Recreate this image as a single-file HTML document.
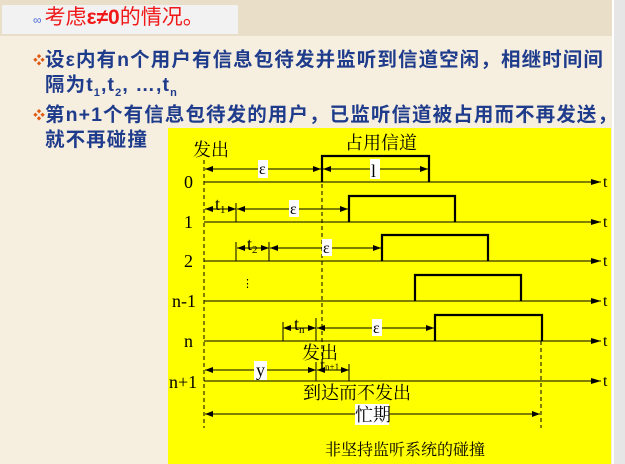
<!DOCTYPE html>
<html><head><meta charset="utf-8"><style>
html,body{margin:0;padding:0;}
body{width:625px;height:464px;position:relative;overflow:hidden;background:#f6eedf;font-family:"Liberation Sans","Noto Sans CJK SC",sans-serif;}
.top{position:absolute;left:0;top:0;width:612px;height:36px;background:#e9dfc8;}
.hdr{position:absolute;left:2px;top:5px;width:236px;height:29px;background:#f2f2f2;}
.ttl{position:absolute;left:33px;top:4px;font-size:21px;color:#f01818;white-space:nowrap;line-height:28px;}
.ttl .ic{color:#4a6ad8;font-size:12px;margin-right:3px;}
.right{position:absolute;left:612px;top:0;width:13px;height:464px;background:#e6e6e6;border-left:2px solid #fff;}
.b{position:absolute;font-size:19.5px;font-weight:bold;color:#1f3c8c;white-space:nowrap;line-height:24px;letter-spacing:1.1px;}
.d{color:#e05a10;font-size:12px;position:absolute;left:-12px;top:0;}
.yel{position:absolute;left:168px;top:128px;width:443px;height:336px;background:#ffff00;}
svg{position:absolute;left:0;top:0;}
svg text{font-family:"Liberation Serif","Noto Serif CJK SC",serif;}
</style></head><body>
<div class="top"></div>
<div class="hdr"></div>
<div class="ttl"><span class="ic">&#x221E;</span>考虑<b>ε≠0</b>的情况。</div>
<div class="right"></div>
<div class="b" style="left:45px;top:48px"><span class="d">❖</span>设ε内有n个用户有信息包待发并监听到信道空闲，相继时间间</div>
<div class="b" style="left:45px;top:73px">隔为t<sub style="font-size:11px">1</sub>,t<sub style="font-size:11px">2</sub>, …,t<sub style="font-size:11px">n</sub></div>
<div class="b" style="left:45px;top:103px"><span class="d">❖</span>第n+1个有信息包待发的用户，已监听信道被占用而不再发送，</div>
<div class="b" style="left:45px;top:128px">就不再碰撞</div>
<div class="yel"></div>
<svg width="625" height="464" viewBox="0 0 625 464">
<defs><marker id="a" viewBox="0 0 10 6" refX="10" refY="3" markerWidth="10" markerHeight="6" orient="auto-start-reverse" markerUnits="userSpaceOnUse"><path d="M0,0L10,3L0,6z" fill="#000"/></marker>
<marker id="b" viewBox="0 0 8 6" refX="8" refY="3" markerWidth="8" markerHeight="6" orient="auto-start-reverse" markerUnits="userSpaceOnUse"><path d="M0,0L8,3L0,6z" fill="#000"/></marker></defs>
<g stroke="#000" stroke-width="1" fill="none">
<line x1="204" y1="160" x2="204" y2="428" stroke-dasharray="4,3"/>
<line x1="322" y1="156" x2="322" y2="370" stroke-dasharray="4,3"/>
<line x1="541" y1="341" x2="541" y2="428" stroke-dasharray="4,3"/>
<g marker-end="url(#a)">
<line x1="204" y1="182" x2="601" y2="182"/><line x1="204" y1="222" x2="601" y2="222"/>
<line x1="204" y1="261" x2="601" y2="261"/><line x1="204" y1="301" x2="601" y2="301"/>
<line x1="204" y1="341" x2="601" y2="341"/><line x1="204" y1="381" x2="601" y2="381"/>
</g>
<g stroke-width="2.2"><path d="M322,182V156H429V182"/><path d="M349,222V196H455V222"/><path d="M382,261V235H488V261"/><path d="M415,301V275H521V301"/><path d="M435,341V315H542V341"/></g>
<g marker-start="url(#b)" marker-end="url(#b)">
<line x1="205" y1="169" x2="321" y2="169"/><line x1="323" y1="169" x2="428" y2="169"/>
<line x1="205" y1="209" x2="236" y2="209"/><line x1="237" y1="209" x2="348" y2="209"/>
<line x1="237" y1="248" x2="269" y2="248"/><line x1="270" y1="248" x2="381" y2="248"/>
<line x1="283" y1="328" x2="316" y2="328"/><line x1="317" y1="328" x2="434" y2="328"/>
<line x1="205" y1="370" x2="316" y2="370"/><line x1="317" y1="370" x2="349" y2="370"/>
<line x1="205" y1="414" x2="540" y2="414"/>
</g>
<line x1="236" y1="203" x2="236" y2="222"/><line x1="236" y1="242" x2="236" y2="261"/><line x1="269" y1="242" x2="269" y2="261"/>
<line x1="283" y1="322" x2="283" y2="341"/><line x1="316" y1="318" x2="316" y2="341"/><line x1="316" y1="362" x2="316" y2="381"/><line x1="349" y1="364" x2="349" y2="381"/>
</g>
<g fill="#fff"><rect x="258" y="160" width="10" height="18"/><rect x="370" y="159" width="10" height="20"/><rect x="289" y="200" width="10" height="17"/><rect x="322" y="239" width="10" height="17"/><rect x="372" y="319" width="10" height="17"/><rect x="254" y="361" width="13" height="19"/><rect x="355" y="404" width="34" height="21"/></g>
<g font-size="18" fill="#000">
<text x="193" y="156">发出</text><text x="345" y="149">占用信道</text>
<text x="259" y="174" font-size="16">ε</text><text x="371" y="177">l</text>
<text x="290" y="214" font-size="16">ε</text><text x="323" y="253" font-size="16">ε</text><text x="373" y="333" font-size="16">ε</text>
<text x="215" y="210">t<tspan font-size="11" dy="3">1</tspan></text>
<text x="247" y="250">t<tspan font-size="11" dy="3">2</tspan></text>
<text x="294" y="330">t<tspan font-size="11" dy="3">n</tspan></text>
<text x="320" y="371">t<tspan font-size="9" dy="-1">n+1</tspan></text>
<text x="256" y="376">y</text>
<text x="242" y="287" font-size="11">⋮</text>
<text x="184" y="188">0</text><text x="184" y="228">1</text><text x="184" y="267">2</text><text x="172" y="307">n-1</text><text x="184" y="347">n</text><text x="169" y="388">n+1</text>
<g font-size="16" font-family="Liberation Sans"><text x="603" y="187">t</text><text x="603" y="227">t</text><text x="603" y="266">t</text><text x="603" y="306">t</text><text x="603" y="346">t</text><text x="603" y="386">t</text></g>
<text x="302" y="359">发出</text><text x="303" y="399">到达而不发出</text><text x="355" y="421">忙期</text>
<text x="325" y="455" font-size="16">非坚持监听系统的碰撞</text>
</g>
</svg>
</body></html>
